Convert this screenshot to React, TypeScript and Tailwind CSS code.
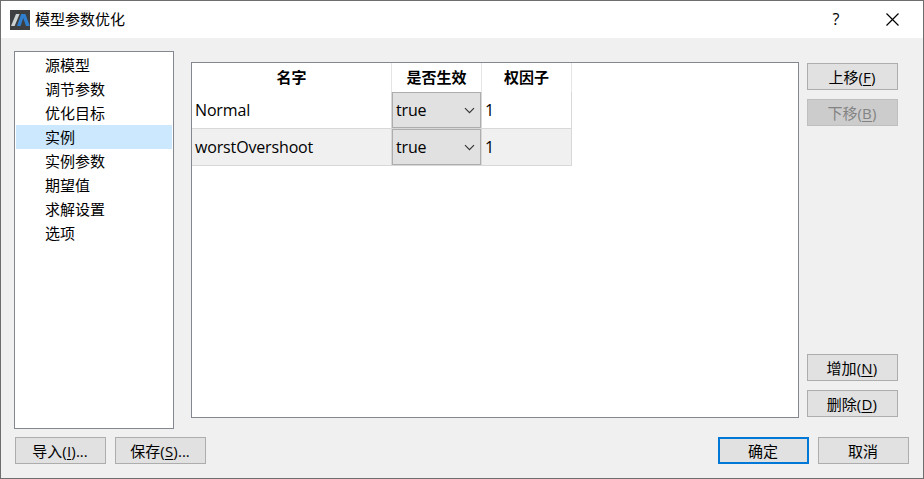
import type { ReactNode } from 'react';

const SECTIONS = ['源模型', '调节参数', '优化目标', '实例', '实例参数', '期望值', '求解设置', '选项'];

const ROWS = [
  { name: 'Normal', active: 'true', weight: '1' },
  { name: 'worstOvershoot', active: 'true', weight: '1' },
];

type ButtonProps = { children: ReactNode; disabled?: boolean; primary?: boolean };

function Button({ children, disabled, primary }: ButtonProps) {
  const look = disabled
    ? 'border border-[#bfbfbf] bg-[#cccccc] text-[#838383]'
    : primary
      ? 'border-2 border-[#0078d7] bg-[#e1e1e1]'
      : 'border border-[#adadad] bg-[#e1e1e1]';
  return (
    <button disabled={disabled} className={`flex h-[27px] w-[91px] shrink-0 items-center justify-center pr-px whitespace-nowrap ${look}`}>
      <span>{children}</span>
    </button>
  );
}

function Key({ k }: { k: string }) {
  return (
    <span className="tracking-[0.2px]">
      (<span className="underline decoration-1 underline-offset-2">{k}</span>)
    </span>
  );
}

function Logo() {
  return (
    <svg width="20" height="20" viewBox="0 0 20 20">
      <rect width="20" height="20" fill="#3d3f41" />
      <path d="M6 4H9.6L4.6 16H1Z" fill="#ccd2d2" />
      <path d="M11.2 4H15.4L19.8 16H16L13.2 8L10.6 16H7Z" fill="#2f7fd0" />
    </svg>
  );
}

function Combo({ value }: { value: string }) {
  return (
    <div className="flex h-9 w-[89px] items-center justify-between border border-[#adadad] bg-[#e1e1e1] pr-[5px] pl-[3px]">
      <span>{value}</span>
      <svg width="11" height="7" viewBox="0 0 11 7" fill="none" stroke="#333" strokeWidth="1.15">
        <path d="M1 1.2L5.5 5.7L10 1.2" />
      </svg>
    </div>
  );
}

export default function App() {
  return (
    <div className="flex h-[479px] w-[924px] flex-col border border-[#6e6e6e] bg-[#f0f0f0] font-['Open_Sans','Noto_Sans_CJK_SC',sans-serif] text-[15px] leading-6 text-black">
      <header className="flex h-[37px] shrink-0 items-center bg-white pl-[9px]">
        <Logo />
        <span className="-mt-px ml-[5px]">模型参数优化</span>
        <span className="-mt-px mr-px ml-auto w-[10px] text-center text-[16px]">?</span>
        <svg className="mr-[24px] ml-[44px]" width="13" height="13" viewBox="0 0 13 13" stroke="#000" strokeWidth="1.2">
          <path d="M.5 .5L12.5 12.5M12.5 .5L.5 12.5" />
        </svg>
      </header>

      <main className="flex h-[391px] shrink-0 pt-[13px] pl-[13px]">
        <ul className="h-[378px] w-[160px] border border-[#828790] bg-white p-px">
          {SECTIONS.map((s) => (
            <li key={s} className={`h-6 pl-[29px] ${s === '实例' ? 'bg-[#cce8ff]' : ''}`}>
              {s}
            </li>
          ))}
        </ul>

        <section className="mt-[11px] ml-[17px] h-[356px] w-[608px] border border-[#828790] bg-white">
          <div className="grid h-[29px] w-[380px] grid-cols-[200px_90px_90px] text-center leading-[29px] font-bold">
            {['名字', '是否生效', '权因子'].map((h) => (
              <div key={h} className="border-r border-[#e5e5e5]">
                {h}
              </div>
            ))}
          </div>
          {ROWS.map((r, i) => (
            <div
              key={r.name}
              className={`grid h-[37px] w-[380px] grid-cols-[200px_90px_90px] border-b border-[#d8d8d8] text-[16px] leading-9 tracking-[-0.15px] ${i % 2 ? 'bg-[#f0f0f0]' : ''}`}
            >
              <div className="border-r border-[#d8d8d8] pl-[3px]">{r.name}</div>
              <div className="border-r border-[#d8d8d8]">
                <Combo value={r.active} />
              </div>
              <div className="border-r border-[#d8d8d8] pl-[3px]">{r.weight}</div>
            </div>
          ))}
        </section>

        <aside className="mt-3 ml-2 flex h-[354px] flex-col gap-[9px]">
          <Button>上移<Key k="F" /></Button>
          <Button disabled>下移<Key k="B" /></Button>
          <div className="grow" />
          <Button>增加<Key k="N" /></Button>
          <Button>删除<Key k="D" /></Button>
        </aside>
      </main>

      <footer className="flex gap-[9px] pt-2 pr-[14px] pl-[14px]">
        <Button>导入<Key k="I" />...</Button>
        <Button>保存<Key k="S" />...</Button>
        <div className="grow" />
        <Button primary>确定</Button>
        <Button>取消</Button>
      </footer>
    </div>
  );
}
